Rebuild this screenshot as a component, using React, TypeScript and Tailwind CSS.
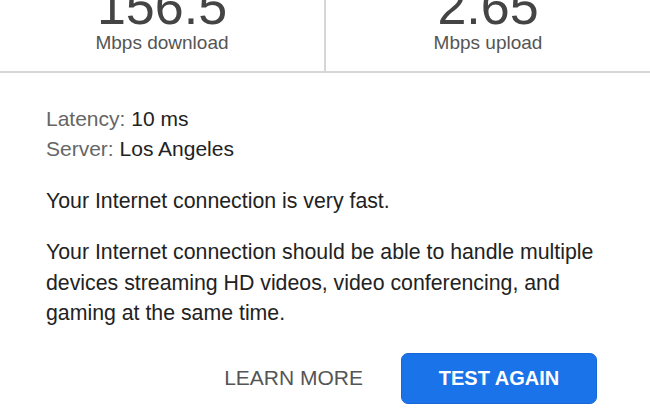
const Stat = ({ value, label, divider }: { value: string; label: string; divider?: boolean }) => (
  <div
    className={`flex flex-1 flex-col items-center overflow-hidden ${
      divider ? "border-r-2 border-[#d6d6d6]" : ""
    }`}
  >
    <div className="-mt-[19px] text-[52px] leading-[50px] text-[#444444]">{value}</div>
    <div className="mt-[1px] text-[19px] leading-[22px] text-[#555555]">{label}</div>
  </div>
);

export default function App() {
  return (
    <div className="h-[420px] w-[650px] overflow-hidden bg-white font-['Liberation_Sans',Arial,sans-serif]">
      <div className="flex h-[73px] border-b-2 border-[#d6d6d6]">
        <Stat value="156.5" label="Mbps download" divider />
        <Stat value="2.65" label="Mbps upload" />
      </div>

      <div className="px-[46px] pt-[31px] text-[21px] leading-[30px] text-[#222222]">
        <div>
          <span className="text-[#666666]">Latency: </span>10 ms
        </div>
        <div>
          <span className="text-[#666666]">Server: </span>Los Angeles
        </div>

        <p className="mt-[22px] text-[21.3px]">Your Internet connection is very fast.</p>

        <p className="mt-[21px] text-[21.3px] leading-[30.5px]">
          Your Internet connection should be able to handle multiple devices streaming HD videos, video
          conferencing, and gaming at the same time.
        </p>

        <div className="mr-[7px] mt-[24px] flex items-center justify-end gap-[38px]">
          <button className="text-[21px] uppercase text-[#555555]">Learn more</button>
          <button className="h-[51px] w-[196px] rounded-[7px] border border-[#1668d6] bg-[#1a73e8] text-[20px] font-bold uppercase text-white">
            Test again
          </button>
        </div>
      </div>
    </div>
  );
}
